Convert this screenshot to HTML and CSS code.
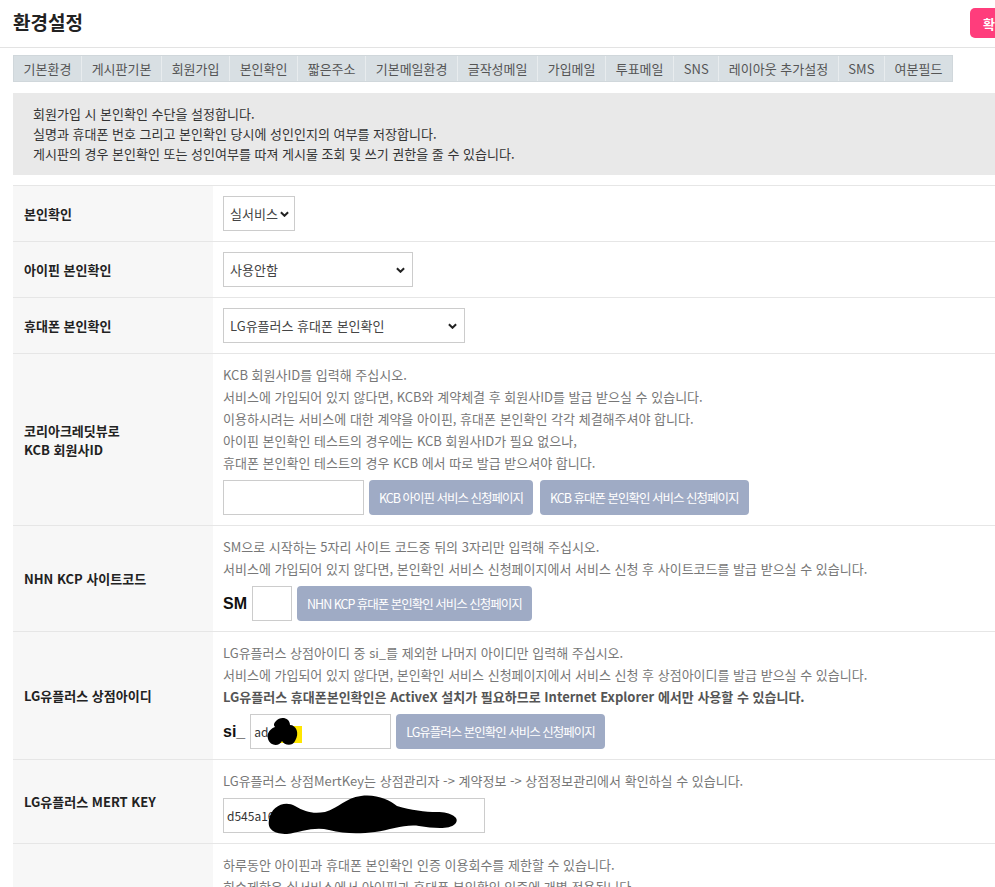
FILE: index.html
```html
<!DOCTYPE html>
<html lang="ko">
<head>
<meta charset="utf-8">
<title>환경설정</title>
<link rel="stylesheet" href="styles.css">
</head>
<body>
<div class="page">
  <header class="header">
    <h1 class="title">환경설정</h1>
    <button class="btn-submit" type="button">확인</button>
  </header>
  <div class="content">
    <ul class="tabs">
      <li class="tab">기본환경</li>
      <li class="tab">게시판기본</li>
      <li class="tab">회원가입</li>
      <li class="tab">본인확인</li>
      <li class="tab">짧은주소</li>
      <li class="tab">기본메일환경</li>
      <li class="tab">글작성메일</li>
      <li class="tab">가입메일</li>
      <li class="tab">투표메일</li>
      <li class="tab">SNS</li>
      <li class="tab">레이아웃 추가설정</li>
      <li class="tab">SMS</li>
      <li class="tab">여분필드</li>
    </ul>

    <div class="info">
      <p>회원가입 시 본인확인 수단을 설정합니다.</p>
      <p>실명과 휴대폰 번호 그리고 본인확인 당시에 성인인지의 여부를 저장합니다.</p>
      <p>게시판의 경우 본인확인 또는 성인여부를 따져 게시물 조회 및 쓰기 권한을 줄 수 있습니다.</p>
    </div>

    <table class="form-table">
      <colgroup><col class="col-label"><col></colgroup>
      <tbody>
        <tr>
          <th>본인확인</th>
          <td>
            <span class="select-wrap">
              <select class="select select-sm w-72"><option>실서비스</option><option>테스트</option></select>
              <svg class="chev chev-sm" viewBox="0 0 10 6"><polyline points="1,1 5,5 9,1"/></svg>
            </span>
          </td>
        </tr>
        <tr>
          <th>아이핀 본인확인</th>
          <td>
            <span class="select-wrap">
              <select class="select w-190"><option>사용안함</option><option>코리아크레딧뷰로(KCB) 아이핀</option></select>
              <svg class="chev" viewBox="0 0 10 6"><polyline points="1,1 5,5 9,1"/></svg>
            </span>
          </td>
        </tr>
        <tr>
          <th>휴대폰 본인확인</th>
          <td>
            <span class="select-wrap">
              <select class="select w-242"><option>LG유플러스 휴대폰 본인확인</option><option>사용안함</option></select>
              <svg class="chev" viewBox="0 0 10 6"><polyline points="1,1 5,5 9,1"/></svg>
            </span>
          </td>
        </tr>
        <tr>
          <th>코리아크레딧뷰로<br>KCB 회원사ID</th>
          <td>
            <div class="desc">
              <p>KCB 회원사ID를 입력해 주십시오.</p>
              <p>서비스에 가입되어 있지 않다면, KCB와 계약체결 후 회원사ID를 발급 받으실 수 있습니다.</p>
              <p>이용하시려는 서비스에 대한 계약을 아이핀, 휴대폰 본인확인 각각 체결해주셔야 합니다.</p>
              <p>아이핀 본인확인 테스트의 경우에는 KCB 회원사ID가 필요 없으나,</p>
              <p>휴대폰 본인확인 테스트의 경우 KCB 에서 따로 발급 받으셔야 합니다.</p>
            </div>
            <div class="field-row">
              <input class="input w-141" type="text">
              <button class="btn-sub" type="button">KCB 아이핀 서비스 신청페이지</button>
              <button class="btn-sub gap-l" type="button">KCB 휴대폰 본인확인 서비스 신청페이지</button>
            </div>
          </td>
        </tr>
        <tr>
          <th>NHN KCP 사이트코드</th>
          <td>
            <div class="desc">
              <p>SM으로 시작하는 5자리 사이트 코드중 뒤의 3자리만 입력해 주십시오.</p>
              <p>서비스에 가입되어 있지 않다면, 본인확인 서비스 신청페이지에서 서비스 신청 후 사이트코드를 발급 받으실 수 있습니다.</p>
            </div>
            <div class="field-row">
              <span class="prefix">SM</span>
              <input class="input w-40" type="text">
              <button class="btn-sub" type="button">NHN KCP 휴대폰 본인확인 서비스 신청페이지</button>
            </div>
          </td>
        </tr>
        <tr>
          <th>LG유플러스 상점아이디</th>
          <td>
            <div class="desc">
              <p>LG유플러스 상점아이디 중 si_를 제외한 나머지 아이디만 입력해 주십시오.</p>
              <p>서비스에 가입되어 있지 않다면, 본인확인 서비스 신청페이지에서 서비스 신청 후 상점아이디를 발급 받으실 수 있습니다.</p>
              <p><strong>LG유플러스 휴대폰본인확인은 ActiveX 설치가 필요하므로 Internet Explorer 에서만 사용할 수 있습니다.</strong></p>
            </div>
            <div class="field-row">
              <span class="prefix">si_</span>
              <span class="input-wrap">
                <input class="input w-141" type="text" value="ad">
                <svg class="redact redact-id" viewBox="0 0 40 32">
                  <rect x="18" y="9" width="22" height="17" fill="#ffe600"/>
                  <path d="M14 4 C18 -1 28 0 28 8 C34 8 38 16 33 24 C30 30 22 28 20 24 C17 30 8 29 6 22 C4 15 10 11 13 10 C11 8 12 6 14 4 Z" fill="#000"/>
                </svg>
              </span>
              <button class="btn-sub" type="button">LG유플러스 본인확인 서비스 신청페이지</button>
            </div>
          </td>
        </tr>
        <tr>
          <th>LG유플러스 MERT KEY</th>
          <td>
            <div class="desc">
              <p>LG유플러스 상점MertKey는 상점관리자 -&gt; 계약정보 -&gt; 상점정보관리에서 확인하실 수 있습니다.</p>
            </div>
            <div class="field-row">
              <span class="input-wrap">
                <input class="input w-262" type="text" value="d545a16">
                <svg class="redact redact-key" viewBox="0 0 200 46">
                  <path d="M4 28 C6 14 20 8 30 14 C40 20 48 22 60 20 C74 16 80 6 96 4 C112 2 124 8 132 14 C146 18 160 20 172 20 C186 20 196 26 190 32 C184 38 168 36 154 34 C140 32 126 38 110 40 C94 42 80 42 64 38 C50 34 36 40 22 42 C10 42 2 38 4 28 Z" fill="#000"/>
                </svg>
              </span>
            </div>
          </td>
        </tr>
        <tr>
          <th>본인확인 이용제한</th>
          <td>
            <div class="desc">
              <p>하루동안 아이핀과 휴대폰 본인확인 인증 이용회수를 제한할 수 있습니다.</p>
              <p>회수제한은 실서비스에서 아이핀과 휴대폰 본인확인 인증에 개별 적용됩니다.</p>
              <p>0 으로 설정하시면 회수제한이 적용되지 않습니다.</p>
            </div>
            <div class="field-row">
              <input class="input w-141" type="text" value="0">
              <span class="unit">회</span>
            </div>
          </td>
        </tr>
      </tbody>
    </table>
  </div>
</div>
</body>
</html>
```

FILE: styles.css
```css
* {
  box-sizing: border-box;
}

html,
body {
  margin: 0;
  padding: 0;
  overflow: hidden;
  background: #fff;
}

body {
  font-family: "Noto Sans CJK KR", "Noto Sans", sans-serif;
  color: #333;
}

.page {
  width: 1033px;
}

/* header */
.header {
  display: flex;
  justify-content: space-between;
  align-items: center;
  height: 48px;
  padding: 0 13px 1px;
  border-bottom: 1px solid #e3e3e3;
}

.title {
  margin: 0 0 4px;
  font-size: 19px;
  font-weight: 700;
  color: #222;
  line-height: 1;
}

.btn-submit {
  height: 30px;
  padding: 0 13px;
  border: 0;
  border-radius: 5px;
  background: #ff3d7c;
  color: #fff;
  font-family: inherit;
  font-size: 13px;
  font-weight: 700;
}

.content {
  padding-left: 13px;
}

/* tabs */
.tabs {
  display: flex;
  width: fit-content;
  margin: 7px 0 0;
  padding: 0;
  list-style: none;
  background: #d8dfe3;
  border: 1px solid #d0d7db;
}

.tab {
  height: 25px;
  line-height: 25px;
  padding: 0 9.6px;
  font-size: 13px;
  color: #555;
  border-right: 1px solid #e8ecee;
}

.tab:last-child {
  border-right: 0;
}

/* info box */
.info {
  margin-top: 11px;
  padding: 11px 20px;
  background: #e9e9e9;
  font-size: 13px;
  line-height: 20px;
  color: #333;
}

.info p {
  margin: 0;
}

/* form table */
.form-table {
  width: 100%;
  margin-top: 10px;
  border-collapse: collapse;
  table-layout: fixed;
  border-top: 1px solid #e6e6e6;
}

.col-label {
  width: 200px;
}

.form-table th {
  padding: 10px 11px;
  background: #f7f7f7;
  text-align: left;
  font-size: 13px;
  font-weight: 700;
  color: #222;
  line-height: 19px;
  border-bottom: 1px solid #e6e6e6;
  vertical-align: middle;
}

.form-table td {
  padding: 10px 10px;
  border-bottom: 1px solid #e6e6e6;
  vertical-align: middle;
}

/* select */
.select-wrap {
  position: relative;
  display: inline-block;
  vertical-align: middle;
}

.select {
  display: block;
  height: 35px;
  padding: 0 22px 0 6px;
  border: 1px solid #ccc;
  border-radius: 0;
  background: #fff;
  font-family: inherit;
  font-size: 13px;
  color: #444;
  -webkit-appearance: none;
  appearance: none;
}

.select-sm {
  padding: 0 12px 0 6px;
}

.chev {
  position: absolute;
  right: 8px;
  top: 15px;
  width: 9px;
  height: 6px;
  pointer-events: none;
}

.chev-sm {
  right: 6px;
}

.chev polyline {
  fill: none;
  stroke: #222;
  stroke-width: 2.2;
}

.w-72 { width: 72px; }
.w-190 { width: 190px; }
.w-242 { width: 242px; }
.w-141 { width: 141px; }
.w-40 { width: 40px; }
.w-262 { width: 262px; }

/* descriptions */
.desc {
  font-size: 13px;
  line-height: 22px;
  color: #777;
}

.desc p {
  margin: 0;
  white-space: nowrap;
}

.desc strong {
  color: #555;
  font-weight: 700;
}

.field-row {
  display: flex;
  align-items: center;
  gap: 5px;
  margin-top: 6px;
}

.input {
  height: 35px;
  padding: 0 3px;
  border: 1px solid #ccc;
  border-radius: 0;
  background: #fff;
  font-family: inherit;
  font-size: 12px;
  color: #333;
}

.input-wrap {
  position: relative;
  display: inline-block;
}

.input-wrap .input {
  display: block;
}

.redact {
  position: absolute;
  pointer-events: none;
  overflow: visible;
}

.redact-id {
  left: 12px;
  top: 3px;
  width: 40px;
  height: 32px;
}

.redact-key {
  left: 42px;
  top: -6px;
  width: 200px;
  height: 46px;
}

.prefix {
  font-family: "Liberation Sans", "Noto Sans", sans-serif;
  font-size: 16px;
  font-weight: 700;
  color: #111;
}

.unit {
  font-size: 13px;
  color: #333;
}

.btn-sub {
  height: 35px;
  padding: 0 10px;
  border: 0;
  border-radius: 4px;
  background: #9fabc5;
  color: #fff;
  font-family: inherit;
  font-size: 12.5px;
  letter-spacing: -1px;
  white-space: nowrap;
}

.gap-l {
  margin-left: 2px;
}
```
